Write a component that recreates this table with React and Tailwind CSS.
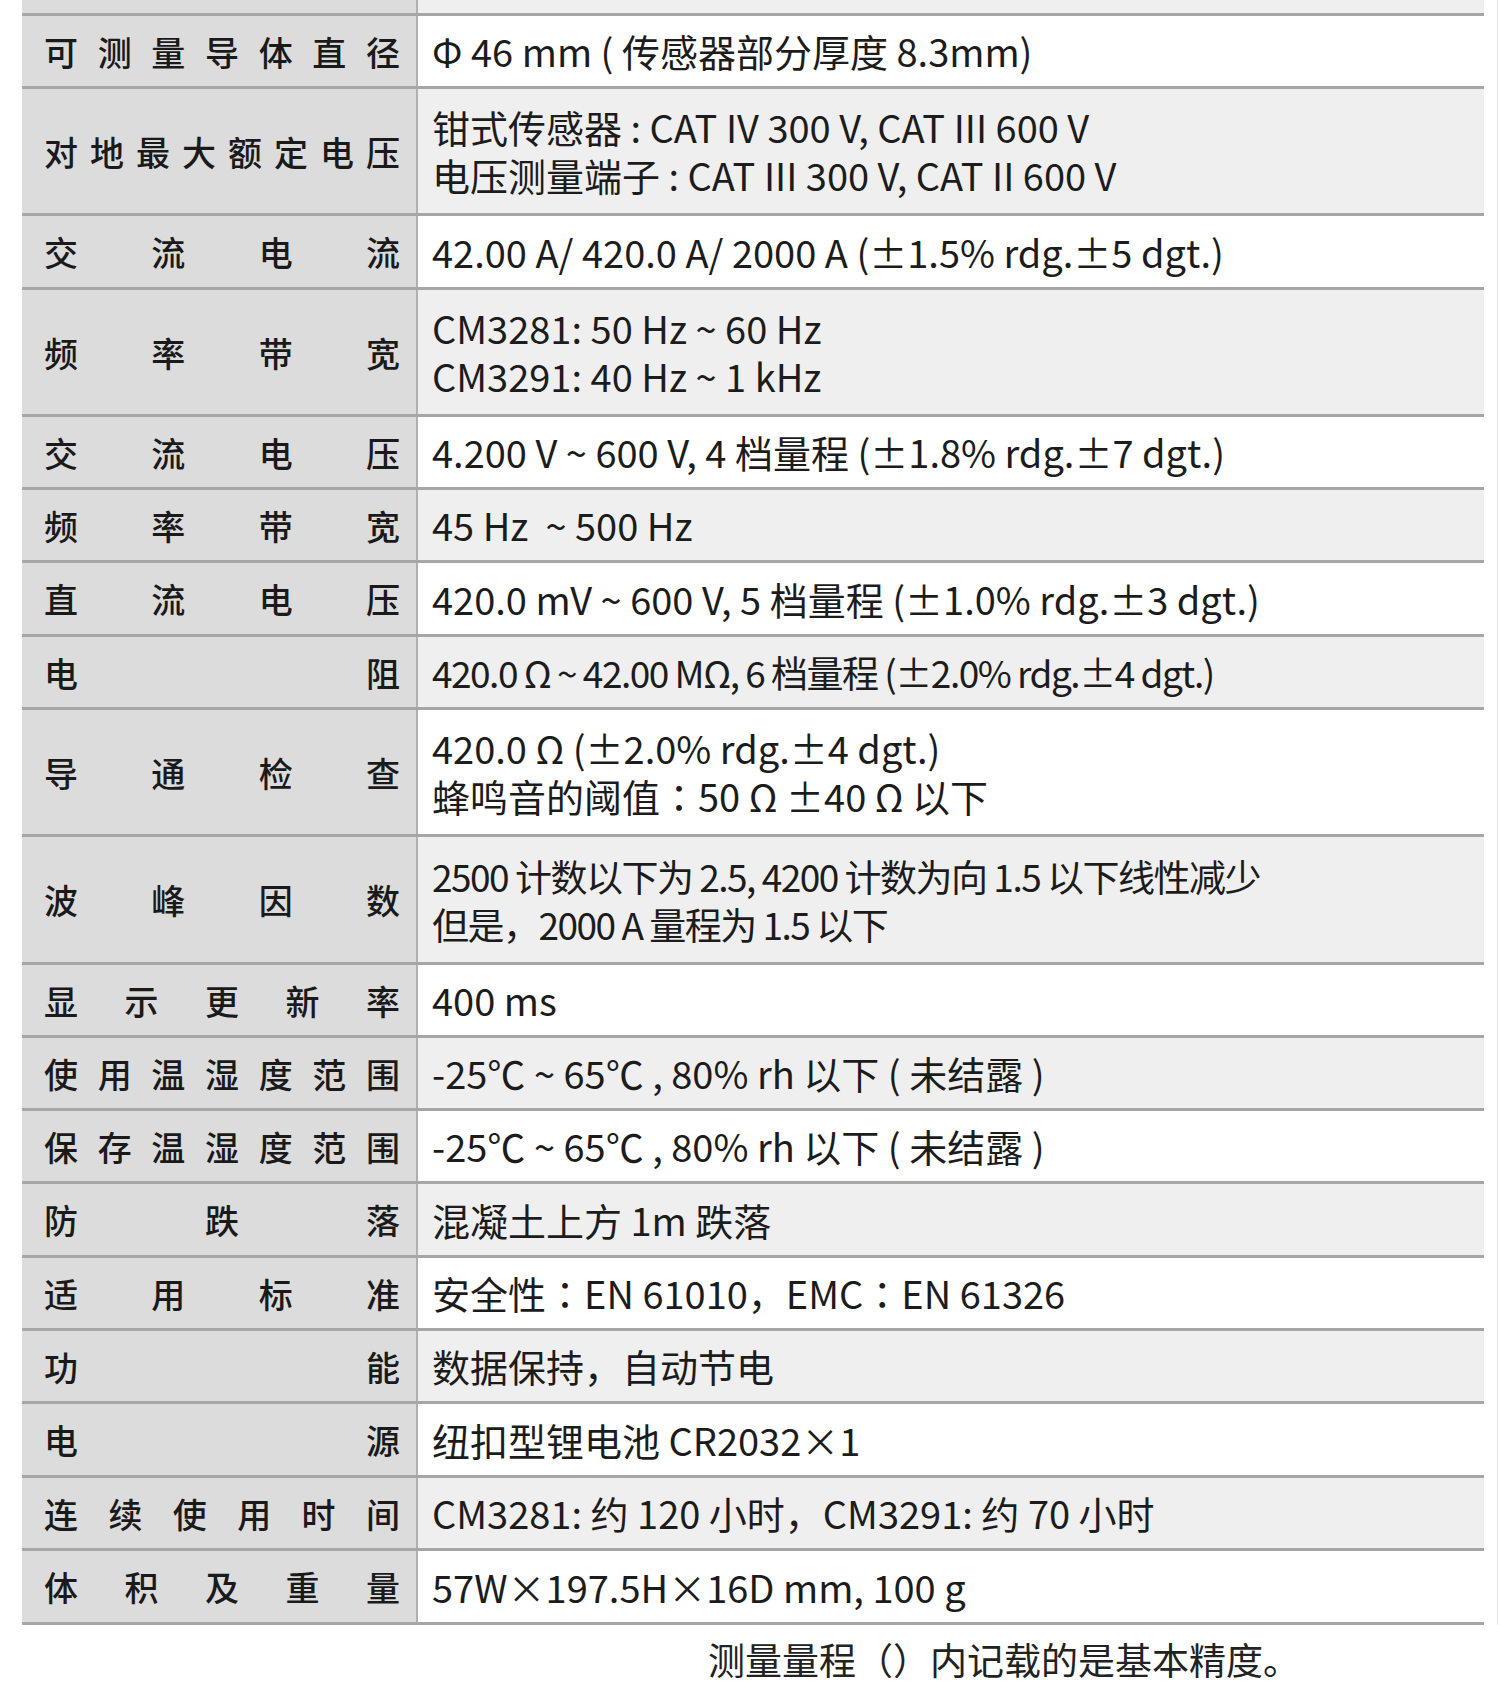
import React from 'react';

const rows = [
  { label: '可测量导体直径', h: 'h-[73px]', lines: ['Φ 46 mm ( 传感器部分厚度 8.3mm)'] },
  { label: '对地最大额定电压', h: 'h-[127px]', lines: ['钳式传感器 : CAT IV 300 V, CAT III 600 V', '电压测量端子 : CAT III 300 V, CAT II 600 V'] },
  { label: '交流电流', h: 'h-[74px]', lines: ['42.00 A/ 420.0 A/ 2000 A (±1.5% rdg.±5 dgt.)'] },
  { label: '频率带宽', h: 'h-[127px]', lines: ['CM3281: 50 Hz ~ 60 Hz', 'CM3291: 40 Hz ~ 1 kHz'] },
  { label: '交流电压', h: 'h-[73px]', lines: ['4.200 V ~ 600 V, 4 档量程 (±1.8% rdg.±7 dgt.)'] },
  { label: '频率带宽', h: 'h-[73px]', lines: ['45 Hz  ~ 500 Hz'] },
  { label: '直流电压', h: 'h-[74px]', lines: ['420.0 mV ~ 600 V, 5 档量程 (±1.0% rdg.±3 dgt.)'] },
  { label: '电阻', h: 'h-[73px]', tight: true, lines: ['420.0 Ω ~ 42.00 MΩ, 6 档量程 (±2.0% rdg.±4 dgt.)'] },
  { label: '导通检查', h: 'h-[127px]', lines: ['420.0 Ω (±2.0% rdg.±4 dgt.)', '蜂鸣音的阈值：50 Ω ±40 Ω 以下'] },
  { label: '波峰因数', h: 'h-[128px]', tight: true, lines: ['2500 计数以下为 2.5, 4200 计数为向 1.5 以下线性减少', '但是，2000 A 量程为 1.5 以下'] },
  { label: '显示更新率', h: 'h-[73px]', lines: ['400 ms'] },
  { label: '使用温湿度范围', h: 'h-[73px]', lines: ['-25℃ ~ 65℃ , 80% rh 以下 ( 未结露 )'] },
  { label: '保存温湿度范围', h: 'h-[73px]', lines: ['-25℃ ~ 65℃ , 80% rh 以下 ( 未结露 )'] },
  { label: '防跌落', h: 'h-[74px]', lines: ['混凝土上方 1m 跌落'] },
  { label: '适用标准', h: 'h-[73px]', lines: ['安全性：EN 61010，EMC：EN 61326'] },
  { label: '功能', h: 'h-[73px]', lines: ['数据保持，自动节电'] },
  { label: '电源', h: 'h-[74px]', lines: ['纽扣型锂电池 CR2032×1'] },
  { label: '连续使用时间', h: 'h-[73px]', lines: ['CM3281: 约 120 小时，CM3291: 约 70 小时'] },
  { label: '体积及重量', h: 'h-[74px]', lines: ['57W×197.5H×16D mm, 100 g'] },
];

// full-width colon drawn centred in its cell, as the JP face does
function Line({ text }) {
  const parts = text.split('：');
  return (
    <div className="whitespace-pre">
      {parts.map((p, i) => (
        <React.Fragment key={i}>
          {i > 0 && <span style={{ fontFamily: '"Noto Sans CJK JP", sans-serif' }}>：</span>}
          {p}
        </React.Fragment>
      ))}
    </div>
  );
}

function SpecRow({ label, lines, h, tight, shaded }) {
  return (
    <div className={`flex border-b-[3px] border-[#a6a6a6] ${h}`}>
      <div className="w-[396px] shrink-0 bg-[#dcdcdc] border-r-2 border-[#b0b0b0] pl-[22px] pr-[16px] flex items-center justify-between text-[34px] font-medium text-[#1a1a1a]">
        {label.split('').map((ch, i) => (
          <span key={i}>{ch}</span>
        ))}
      </div>
      <div
        className={`flex-1 flex flex-col justify-center pl-[14px] leading-[48px] text-[#1c1c1c] ${tight ? 'text-[37px] tracking-[-1.5px]' : 'text-[38px]'} ${shaded ? 'bg-[#efefef]' : 'bg-white'}`}
      >
        {lines.map((l, i) => (
          <Line key={i} text={l} />
        ))}
      </div>
    </div>
  );
}

export default function App() {
  return (
    <div
      className="w-[1500px] h-[1706px] bg-white overflow-hidden"
      style={{ fontFamily: '"Noto Sans CJK SC", "Noto Sans", sans-serif' }}
    >
      <div className="flex">
        <div className="ml-[22px] w-[1462px]">
          <div className="flex h-[16px] border-b-[3px] border-[#a6a6a6]">
            <div className="w-[396px] bg-[#dcdcdc] border-r-2 border-[#b0b0b0]" />
            <div className="flex-1 bg-[#efefef]" />
          </div>
          {rows.map((r, i) => (
            <SpecRow key={i} label={r.label} h={r.h} tight={r.tight} lines={r.lines} shaded={i % 2 === 1} />
          ))}
        </div>
        <div className="ml-[13px] w-[3px] border-l border-[#e4e4e4]" />
      </div>
      <div className="pl-[708px] pt-[8px] text-[37px] leading-[52px] text-[#222]">
        测量量程（）内记载的是基本精度。
      </div>
    </div>
  );
}
